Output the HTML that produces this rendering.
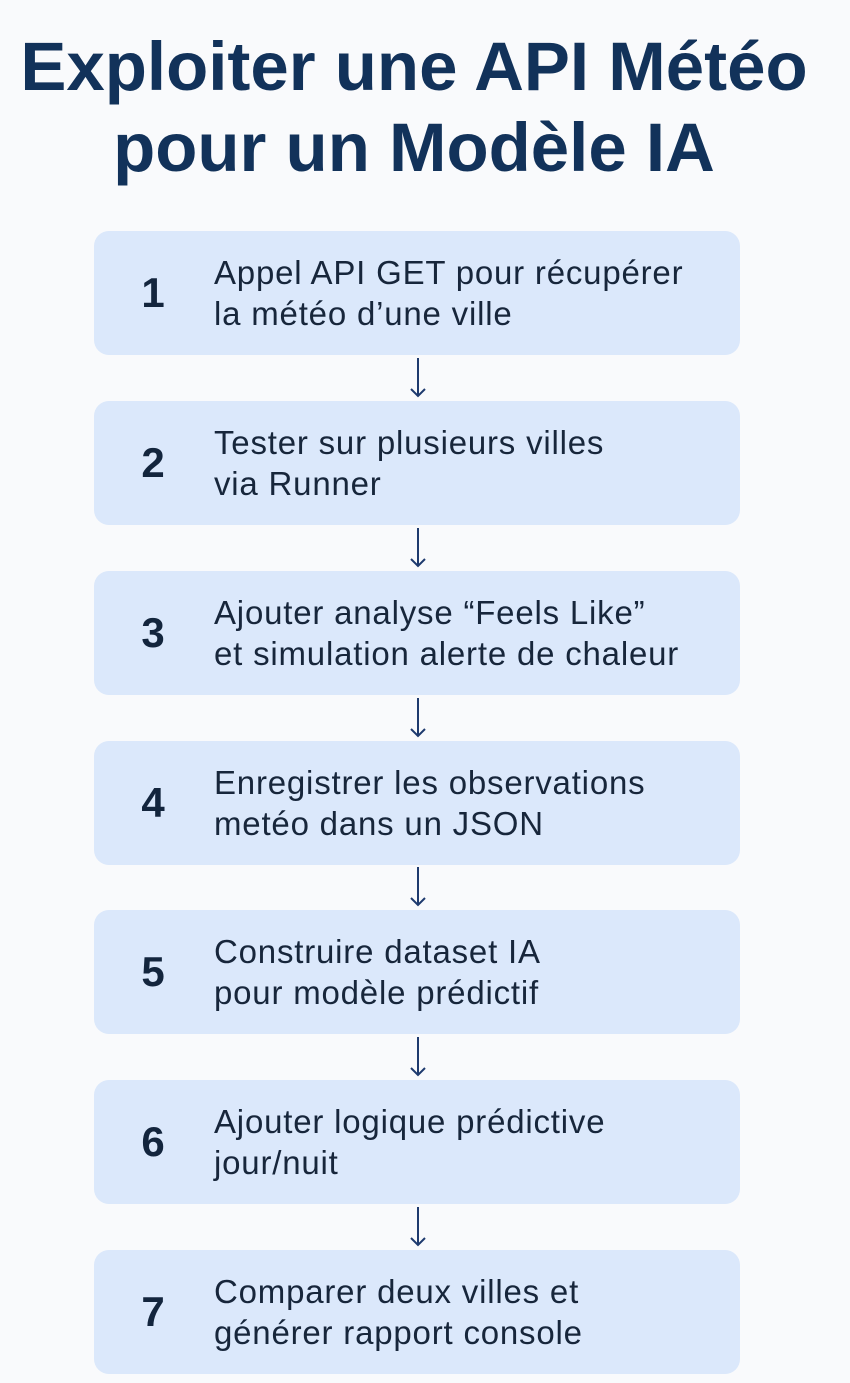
<!DOCTYPE html>
<html><head><meta charset="utf-8"><style>
body{margin:0;width:850px;height:1383px;background:#f9fafc;font-family:"Liberation Sans",sans-serif;position:relative;overflow:hidden}
h1{position:absolute;left:-11px;top:0;width:850px;margin:0;text-align:center;font-size:69px;line-height:81px;padding-top:26px;color:#12325a;font-weight:bold}
.box{position:absolute;left:94px;width:646px;height:124px;background:#dbe8fb;border-radius:15px}
.n{position:absolute;left:34px;width:50px;text-align:center;top:39px;font-size:42px;font-weight:bold;color:#13253d;line-height:46px}
.t{position:absolute;left:120px;top:21px;font-size:33px;letter-spacing:0.8px;line-height:41px;color:#17263b;white-space:nowrap}
.arr{position:absolute;left:408px;width:20px;height:42px}
</style></head><body>
<h1>Exploiter une API Météo<br>pour un Modèle IA</h1>

<div class="box" style="top:231px"><div class="n">1</div><div class="t">Appel API GET pour récupérer<br>la météo d’une ville</div></div>
<div class="box" style="top:401px"><div class="n">2</div><div class="t">Tester sur plusieurs villes<br>via Runner</div></div>
<div class="box" style="top:571px"><div class="n">3</div><div class="t">Ajouter analyse “Feels Like”<br>et simulation alerte de chaleur</div></div>
<div class="box" style="top:741px"><div class="n">4</div><div class="t">Enregistrer les observations<br>metéo dans un JSON</div></div>
<div class="box" style="top:910px"><div class="n">5</div><div class="t">Construire dataset IA<br>pour modèle prédictif</div></div>
<div class="box" style="top:1080px"><div class="n">6</div><div class="t">Ajouter logique prédictive<br>jour/nuit</div></div>
<div class="box" style="top:1250px"><div class="n">7</div><div class="t">Comparer deux villes et<br>générer rapport console</div></div>

<svg class="arr" style="top:357px" viewBox="0 0 20 42"><path d="M10 1V39M3 32L10 39L17 32" stroke="#1e3a6e" stroke-width="2" fill="none"/></svg>
<svg class="arr" style="top:527px" viewBox="0 0 20 42"><path d="M10 1V39M3 32L10 39L17 32" stroke="#1e3a6e" stroke-width="2" fill="none"/></svg>
<svg class="arr" style="top:697px" viewBox="0 0 20 42"><path d="M10 1V39M3 32L10 39L17 32" stroke="#1e3a6e" stroke-width="2" fill="none"/></svg>
<svg class="arr" style="top:866px" viewBox="0 0 20 42"><path d="M10 1V39M3 32L10 39L17 32" stroke="#1e3a6e" stroke-width="2" fill="none"/></svg>
<svg class="arr" style="top:1036px" viewBox="0 0 20 42"><path d="M10 1V39M3 32L10 39L17 32" stroke="#1e3a6e" stroke-width="2" fill="none"/></svg>
<svg class="arr" style="top:1206px" viewBox="0 0 20 42"><path d="M10 1V39M3 32L10 39L17 32" stroke="#1e3a6e" stroke-width="2" fill="none"/></svg>
</body></html>
